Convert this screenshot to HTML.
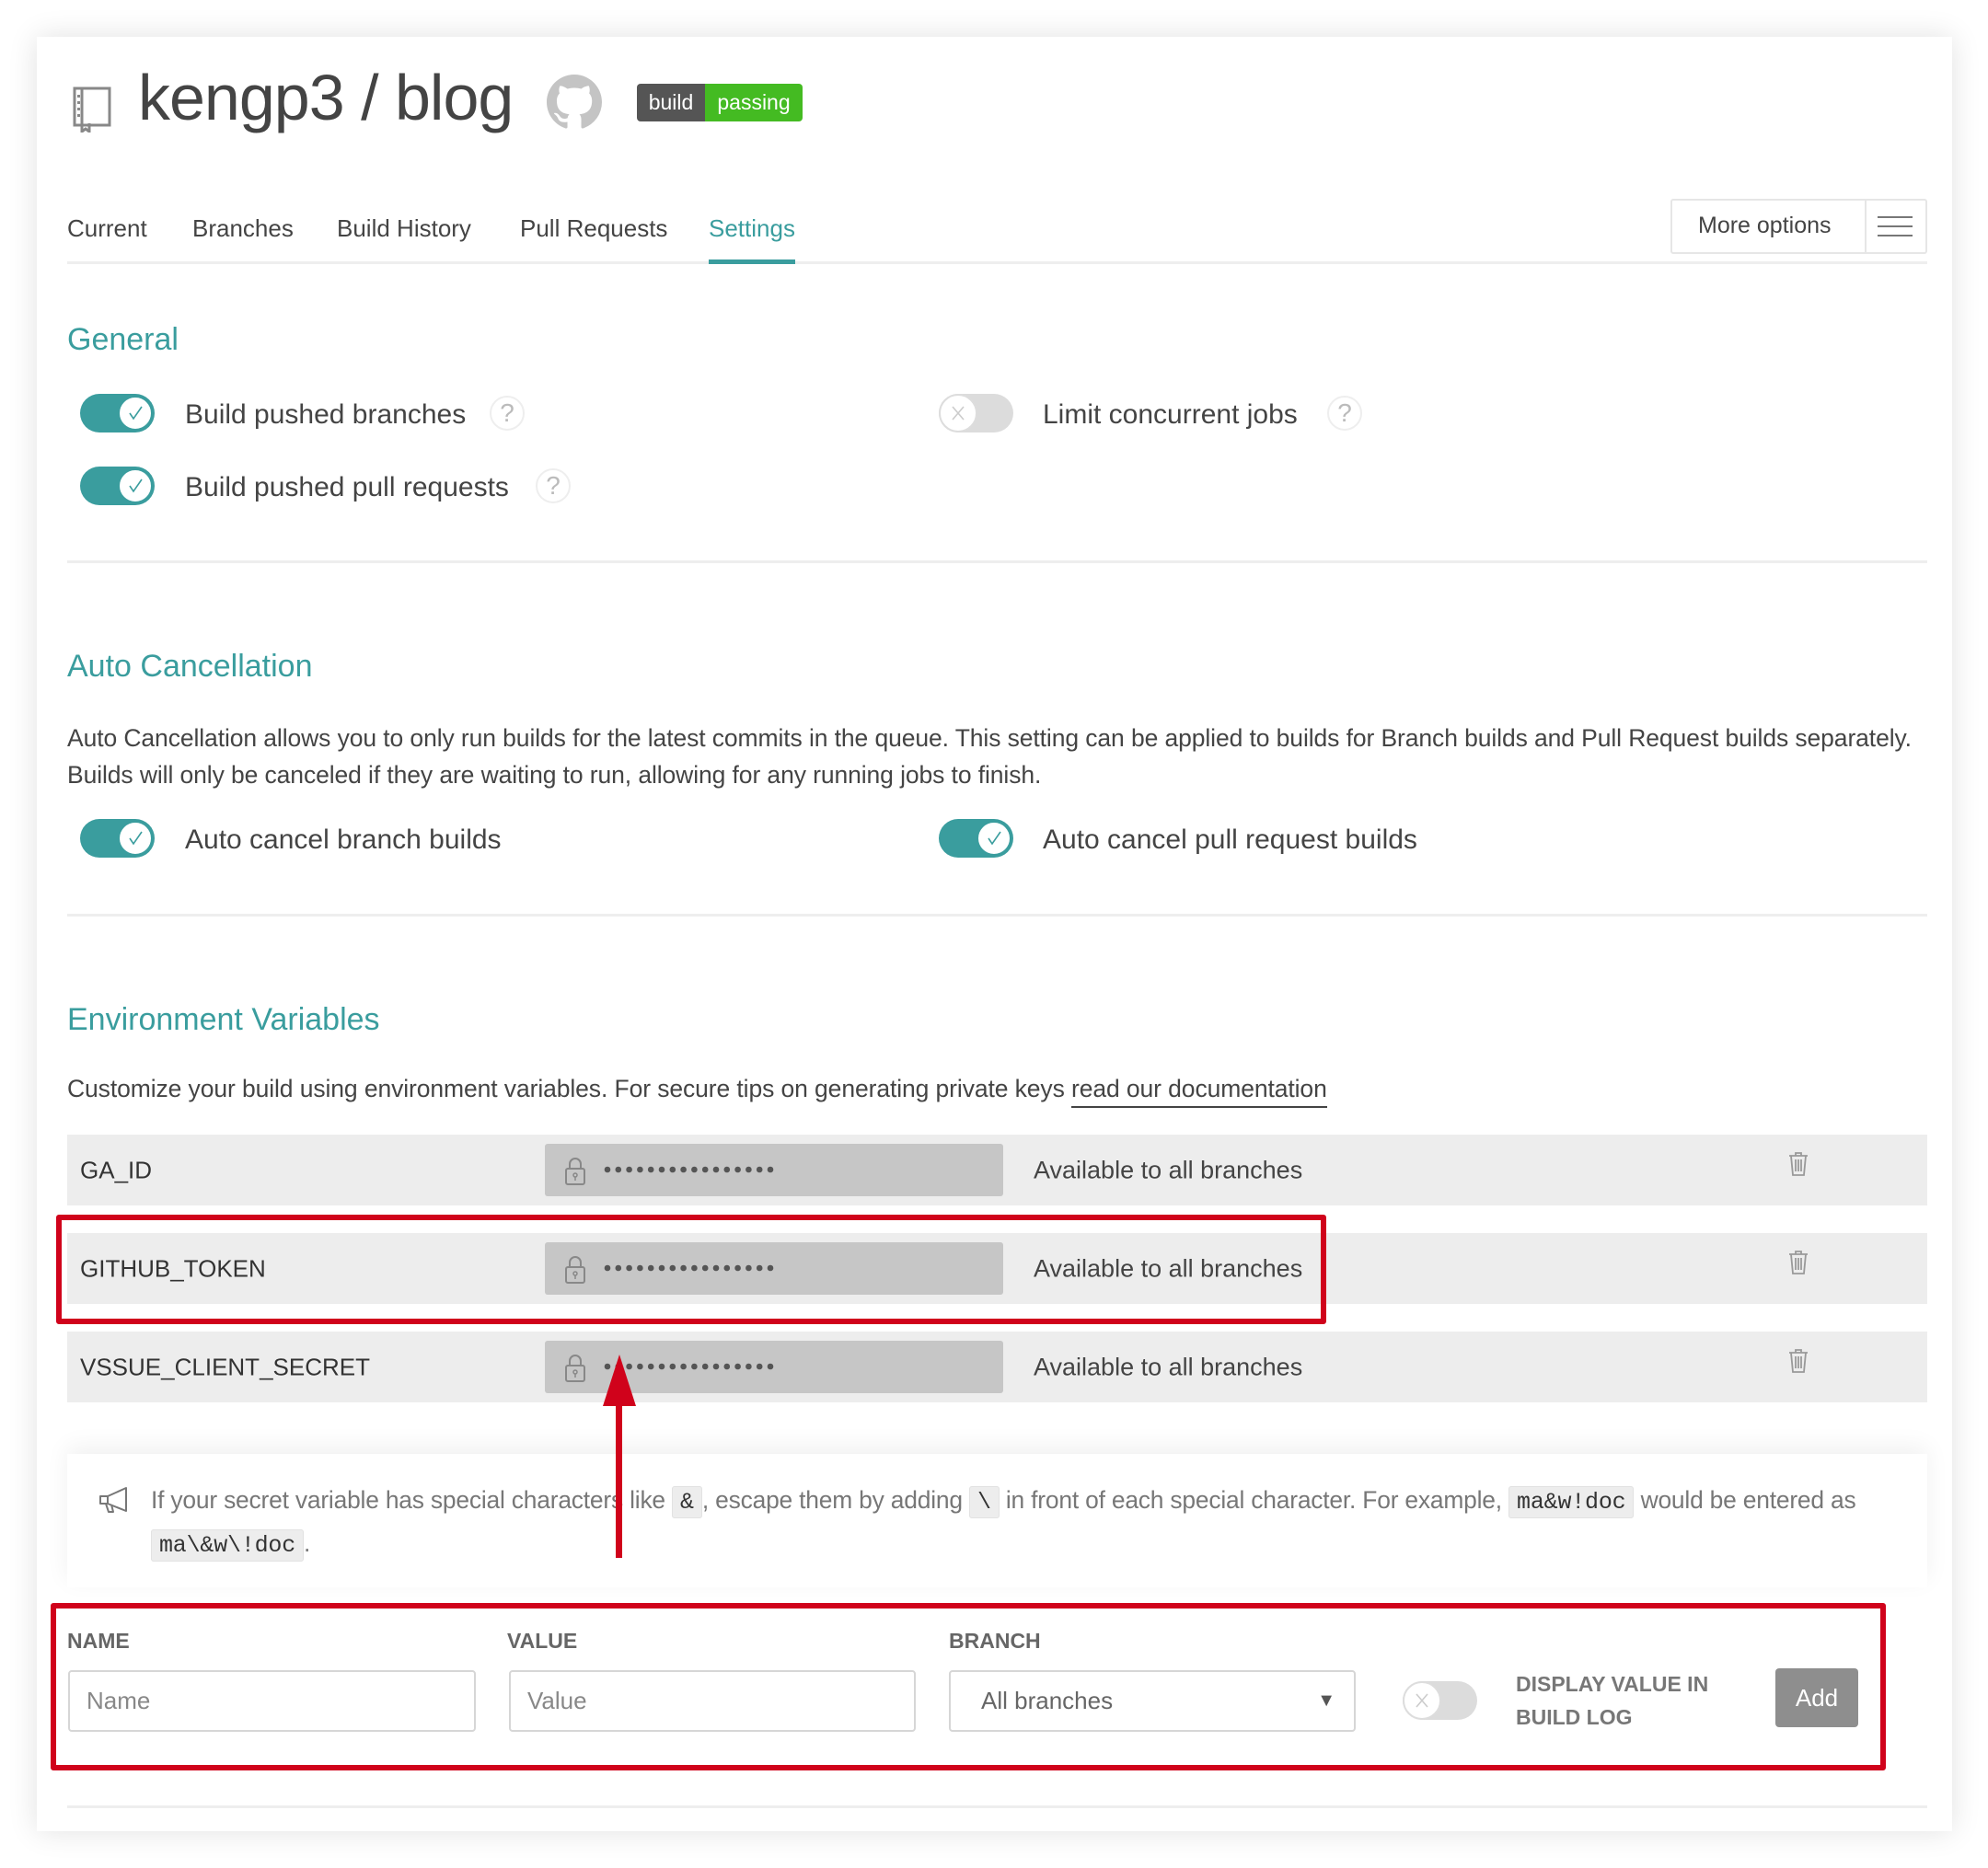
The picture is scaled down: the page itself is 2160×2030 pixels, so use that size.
<!DOCTYPE html>
<html><head><meta charset="utf-8"><style>
*{box-sizing:border-box;margin:0;padding:0}
body{width:2160px;height:2030px;background:#fff;font-family:"Liberation Sans",sans-serif;color:#444;position:relative;overflow:hidden}
.card{position:absolute;left:40px;top:40px;width:2081px;height:1950px;background:#fff;box-shadow:0 0 30px rgba(0,0,0,.12)}
.a{position:absolute;white-space:nowrap}
.h2{color:#3a9d9e;font-size:34px}
.lbl{font-size:30px;color:#444;transform:translateY(-50%)}
.tgl{position:absolute;width:81px;height:42px;border-radius:21px;background:#3a9d9e}
.tgl .k{position:absolute;right:2px;top:2px;width:38px;height:38px;border-radius:50%;background:#fff;display:flex;align-items:center;justify-content:center;border:2px solid #3a9d9e}
.tgl.off{background:#dcdcdc}
.tgl.off .k{left:0;right:auto;top:0;width:42px;height:42px;border:2px solid #ddd}
.q{position:absolute;width:38px;height:38px;border-radius:50%;border:2px solid #eee;color:#bbb;font-size:28px;text-align:center;line-height:34px}
.div{position:absolute;left:73px;width:2021px;height:3px;background:#eee}
.tab{position:absolute;top:233px;font-size:26px;color:#444}
.row{position:absolute;left:73px;width:2021px;height:77px;background:#ededed}
.row .n{position:absolute;left:14px;top:50%;transform:translateY(-50%);font-size:26px;color:#333}
.row .v{position:absolute;left:519px;top:10px;width:498px;height:57px;background:#c6c6c6;border-radius:3px}
.row .dots{position:absolute;left:64px;top:24px}
.row .av{position:absolute;left:1050px;top:50%;transform:translateY(-50%);font-size:27px;color:#444}
.row .tr{position:absolute;left:1870px;top:18px}
.code{font-family:"Liberation Mono",monospace;background:#ededed;border:1px solid #e2e2e2;border-radius:3px;padding:2px 8px;color:#333;font-size:25px}
.inp{position:absolute;top:1815px;height:67px;border:2px solid #d6d6d6;border-radius:4px;font-size:26px;color:#888;padding-left:18px;line-height:63px}
.fl{position:absolute;top:1770px;font-size:23px;font-weight:bold;color:#666}
.redbox{position:absolute;border:6px solid #d0021b;border-radius:3px}
</style></head><body>
<div class="card"></div>
<svg class="a" style="left:79px;top:94px" width="42" height="50" viewBox="0 0 42 50"><rect x="2" y="2" width="38" height="40" fill="none" stroke="#888" stroke-width="3"/><line x1="10" y1="2" x2="10" y2="42" stroke="#888" stroke-width="3"/><g fill="#888"><rect x="5" y="9" width="3" height="3"/><rect x="5" y="16" width="3" height="3"/><rect x="5" y="23" width="3" height="3"/><rect x="5" y="30" width="3" height="3"/></g><path d="M10 40v9l4-3 4 3v-9" fill="none" stroke="#888" stroke-width="3"/></svg>
<div class="a" style="left:150px;top:66px;font-size:70px;color:#444;letter-spacing:-1px">kengp3 / blog</div>
<svg class="a" style="left:594px;top:80px" width="60" height="62" viewBox="0 0 16 16"><path fill="#c4c4c4" d="M8 0C3.58 0 0 3.58 0 8c0 3.54 2.29 6.53 5.47 7.59.4.07.55-.17.55-.38 0-.19-.01-.82-.01-1.49-2.01.37-2.53-.49-2.69-.94-.09-.23-.48-.94-.82-1.13-.28-.15-.68-.52-.01-.53.63-.01 1.08.58 1.23.82.72 1.21 1.87.87 2.33.66.07-.52.28-.87.51-1.07-1.78-.2-3.64-.89-3.640-3.95 0-.87.31-1.59.82-2.15-.08-.2-.36-1.02.08-2.12 0 0 .67-.21 2.2.82.64-.18 1.32-.27 2-.27.68 0 1.36.09 2 .27 1.53-1.04 2.2-.82 2.2-.82.44 1.1.16 1.92.08 2.12.51.56.82 1.27.82 2.15 0 3.07-1.87 3.75-3.65 3.95.29.25.54.73.54 1.48 0 1.07-.01 1.93-.01 2.2 0 .21.15.46.55.38A8.013 8.013 0 0016 8c0-4.42-3.58-8-8-8z"/></svg>
<div class="a" style="left:692px;top:91px;width:180px;height:41px;border-radius:4px;overflow:hidden;display:flex;font-size:23px;color:#fff;line-height:41px">
<div style="background:#555;width:74px;text-align:center">build</div><div style="background:#44bb22;flex:1;text-align:center">passing</div></div>
<div class="tab" style="left:73px">Current</div>
<div class="tab" style="left:209px">Branches</div>
<div class="tab" style="left:366px">Build History</div>
<div class="tab" style="left:565px">Pull Requests</div>
<div class="tab" style="left:770px;color:#3a9d9e">Settings</div>
<div class="div" style="top:284px"></div>
<div class="a" style="left:770px;top:282px;width:94px;height:5px;background:#3a9d9e"></div>
<div class="a" style="left:1815px;top:216px;width:279px;height:60px;border:2px solid #e6e6e6;border-radius:3px">
<span class="a" style="left:28px;top:13px;font-size:25px;color:#444">More options</span>
<div class="a" style="left:209px;top:0;width:2px;height:56px;background:#e6e6e6"></div>
<div class="a" style="left:223px;top:17px;width:38px;height:22px;border-top:2px solid #777;border-bottom:2px solid #777"><div style="margin-top:8px;height:2px;background:#777"></div></div></div>

<div class="a h2" style="left:73px;top:350px">General</div>
<div class="tgl" style="left:87px;top:428px"><div class="k"><svg width="20" height="20" viewBox="0 0 20 20"><path d="M4 10l4 6 9-13" fill="none" stroke="#3a9d9e" stroke-width="1.6"/></svg></div></div>
<div class="a lbl" style="left:201px;top:451px">Build pushed branches</div>
<div class="q" style="left:532px;top:430px">?</div>
<div class="tgl" style="left:87px;top:507px"><div class="k"><svg width="20" height="20" viewBox="0 0 20 20"><path d="M4 10l4 6 9-13" fill="none" stroke="#3a9d9e" stroke-width="1.6"/></svg></div></div>
<div class="a lbl" style="left:201px;top:530px">Build pushed pull requests</div>
<div class="q" style="left:582px;top:509px">?</div>
<div class="tgl off" style="left:1020px;top:428px"><div class="k"><svg width="20" height="20" viewBox="0 0 20 20"><path d="M4 3l12 14M16 3L4 17" stroke="#ccc" stroke-width="1.6"/></svg></div></div>
<div class="a lbl" style="left:1133px;top:451px">Limit concurrent jobs</div>
<div class="q" style="left:1442px;top:430px">?</div>
<div class="div" style="top:609px"></div>

<div class="a h2" style="left:73px;top:705px">Auto Cancellation</div>
<div class="a" style="left:73px;top:782px;font-size:26.5px;line-height:40px;color:#444;letter-spacing:-0.1px">Auto Cancellation allows you to only run builds for the latest commits in the queue. This setting can be applied to builds for Branch builds and Pull Request builds separately.<br>Builds will only be canceled if they are waiting to run, allowing for any running jobs to finish.</div>
<div class="tgl" style="left:87px;top:890px"><div class="k"><svg width="20" height="20" viewBox="0 0 20 20"><path d="M4 10l4 6 9-13" fill="none" stroke="#3a9d9e" stroke-width="1.6"/></svg></div></div>
<div class="a lbl" style="left:201px;top:913px">Auto cancel branch builds</div>
<div class="tgl" style="left:1020px;top:890px"><div class="k"><svg width="20" height="20" viewBox="0 0 20 20"><path d="M4 10l4 6 9-13" fill="none" stroke="#3a9d9e" stroke-width="1.6"/></svg></div></div>
<div class="a lbl" style="left:1133px;top:913px">Auto cancel pull request builds</div>
<div class="div" style="top:993px"></div>

<div class="a h2" style="left:73px;top:1089px">Environment Variables</div>
<div class="a" style="left:73px;top:1168px;font-size:26.5px;color:#444;letter-spacing:-0.1px">Customize your build using environment variables. For secure tips on generating private keys <span style="border-bottom:2px solid #444;padding-bottom:4px">read our documentation</span></div>

<svg width="0" height="0" style="position:absolute"><defs><g id="d"><circle cx="4" cy="4" r="3.3"/><circle cx="15.8" cy="4" r="3.3"/><circle cx="27.6" cy="4" r="3.3"/><circle cx="39.4" cy="4" r="3.3"/><circle cx="51.2" cy="4" r="3.3"/><circle cx="63" cy="4" r="3.3"/><circle cx="74.8" cy="4" r="3.3"/><circle cx="86.6" cy="4" r="3.3"/><circle cx="98.4" cy="4" r="3.3"/><circle cx="110.2" cy="4" r="3.3"/><circle cx="122" cy="4" r="3.3"/><circle cx="133.8" cy="4" r="3.3"/><circle cx="145.6" cy="4" r="3.3"/><circle cx="157.4" cy="4" r="3.3"/><circle cx="169.2" cy="4" r="3.3"/><circle cx="181" cy="4" r="3.3"/></g><g id="l"><rect x="3" y="13" width="20" height="17" rx="2" fill="none" stroke="#888" stroke-width="2"/><path d="M7 13V8a6 6 0 0112 0v5" fill="none" stroke="#888" stroke-width="2"/><circle cx="13" cy="20" r="2" fill="none" stroke="#888" stroke-width="1.5"/><line x1="13" y1="22" x2="13" y2="26" stroke="#888" stroke-width="1.5"/></g><g id="t"><path d="M1 5h20M8 5V2h6v3M3 5l2 21h12l2-21M8 9v13M11 9v13M14 9v13" fill="none" stroke="#999" stroke-width="1.8"/></g></defs></svg>

<div class="row" style="top:1233px"><span class="n">GA_ID</span><div class="v"><svg class="a" style="left:20px;top:14px" width="26" height="32"><use href="#l"/></svg><svg class="dots" width="190" height="8" fill="#555"><use href="#d"/></svg></div><span class="av">Available to all branches</span><svg class="tr" width="22" height="28"><use href="#t"/></svg></div>
<div class="row" style="top:1340px"><span class="n">GITHUB_TOKEN</span><div class="v"><svg class="a" style="left:20px;top:14px" width="26" height="32"><use href="#l"/></svg><svg class="dots" width="190" height="8" fill="#555"><use href="#d"/></svg></div><span class="av">Available to all branches</span><svg class="tr" width="22" height="28"><use href="#t"/></svg></div>
<div class="row" style="top:1447px"><span class="n">VSSUE_CLIENT_SECRET</span><div class="v"><svg class="a" style="left:20px;top:14px" width="26" height="32"><use href="#l"/></svg><svg class="dots" width="190" height="8" fill="#555"><use href="#d"/></svg></div><span class="av">Available to all branches</span><svg class="tr" width="22" height="28"><use href="#t"/></svg></div>
<div class="redbox" style="left:61px;top:1320px;width:1380px;height:119px"></div>

<div class="a" style="left:73px;top:1580px;width:2021px;height:145px;background:#fff;box-shadow:0 -8px 24px rgba(0,0,0,.06)"></div>
<svg class="a" style="left:106px;top:1614px" width="38" height="32" viewBox="0 0 38 32"><path d="M3 12h8l20-9v25L11 20H3z M11 12v8 M9 20l3 9h5l-2-8" fill="none" stroke="#777" stroke-width="2" stroke-linejoin="round"/></svg>
<div class="a" style="left:164px;top:1608px;font-size:26.4px;line-height:45px;color:#777;letter-spacing:-0.2px">If your secret variable has special characters like <span class="code">&amp;</span>, escape them by adding <span class="code">\</span> in front of each special character. For example, <span class="code">ma&amp;w!doc</span> would be entered as<br><span class="code">ma\&amp;w\!doc</span>.</div>

<div class="a" style="left:669px;top:1520px;width:7px;height:173px;background:#d0021b"></div>
<svg class="a" style="left:655px;top:1472px" width="36" height="56" viewBox="0 0 36 56"><path d="M18 0L36 56H0z" fill="#d0021b"/></svg>

<div class="fl" style="left:73px">NAME</div>
<div class="fl" style="left:551px">VALUE</div>
<div class="fl" style="left:1031px">BRANCH</div>
<div class="inp" style="left:74px;width:443px">Name</div>
<div class="inp" style="left:553px;width:442px">Value</div>
<div class="inp" style="left:1031px;width:442px;padding-left:33px;color:#666">All branches<span class="a" style="right:20px;top:0;font-size:20px;color:#555">▼</span></div>
<div class="tgl off" style="left:1524px;top:1827px"><div class="k"><svg width="20" height="20" viewBox="0 0 20 20"><path d="M4 3l12 14M16 3L4 17" stroke="#ccc" stroke-width="1.6"/></svg></div></div>
<div class="a" style="left:1647px;top:1812px;font-size:23px;font-weight:bold;color:#777;line-height:36px">DISPLAY VALUE IN<br>BUILD LOG</div>
<div class="a" style="left:1929px;top:1813px;width:90px;height:64px;background:#8e8e8e;border-radius:4px;color:#fff;font-size:26px;text-align:center;line-height:64px">Add</div>
<div class="redbox" style="left:55px;top:1742px;width:1994px;height:182px"></div>
<div class="div" style="top:1962px"></div>
</body></html>
